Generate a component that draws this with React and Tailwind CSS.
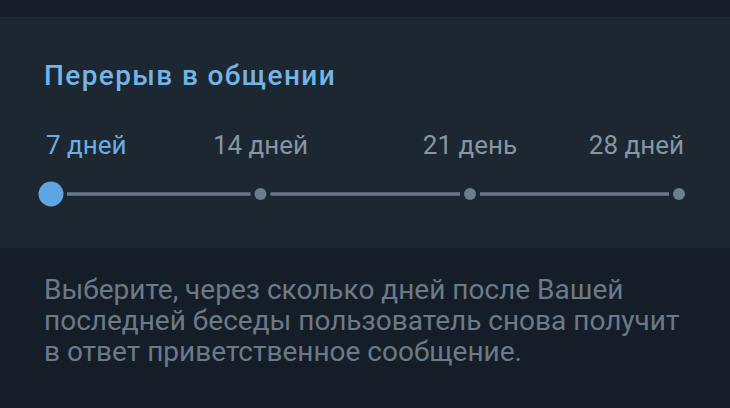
export default function App() {
  const ticks = [51, 260.5, 470, 679];
  return (
    <div className="w-[730px] h-[408px] overflow-hidden bg-[#151e28] font-['Roboto',sans-serif]">
      <div className="h-[17px]" />
      <section className="h-[231px] bg-[#1d2731] pt-[43px]">
        <h1 className="px-[44px] text-[28px] font-medium leading-[32px] tracking-[1.4px] text-[#74b5e8]">
          Перерыв в общении
        </h1>
        <div className="mt-[38px] grid grid-cols-[109.75px_209.5px_209.5px_109.25px] pl-[46px] text-[26px] leading-[30px] text-[#8796a3]">
          <span className="whitespace-nowrap text-left text-[#6aaee5]">7 дней</span>
          <span className="whitespace-nowrap text-center">14 дней</span>
          <span className="whitespace-nowrap text-center">21 день</span>
          <span className="whitespace-nowrap text-right">28 дней</span>
        </div>
        <svg width="730" height="30" viewBox="0 165 730 30" className="mt-[19px] block">
          <g stroke="#687a88" strokeWidth="3.5">
            <line x1="67" y1="180" x2="250.5" y2="180" />
            <line x1="270.5" y1="180" x2="460" y2="180" />
            <line x1="480" y1="180" x2="669" y2="180" />
          </g>
          {ticks.slice(1).map((x) => (
            <circle key={x} cx={x} cy="180" r="6" fill="#6b7e8d" />
          ))}
          <circle cx={ticks[0]} cy="180" r="12.5" fill="#5fa5df" />
        </svg>
      </section>
      <p className="px-[44px] pt-[26px] text-[28px] leading-[31px] text-[#6c7a87]">
        <span className="block whitespace-nowrap">Выберите, через сколько дней после Вашей</span>
        <span className="block whitespace-nowrap">последней беседы пользователь снова получит</span>
        <span className="block whitespace-nowrap">в ответ приветственное сообщение.</span>
      </p>
    </div>
  );
}
